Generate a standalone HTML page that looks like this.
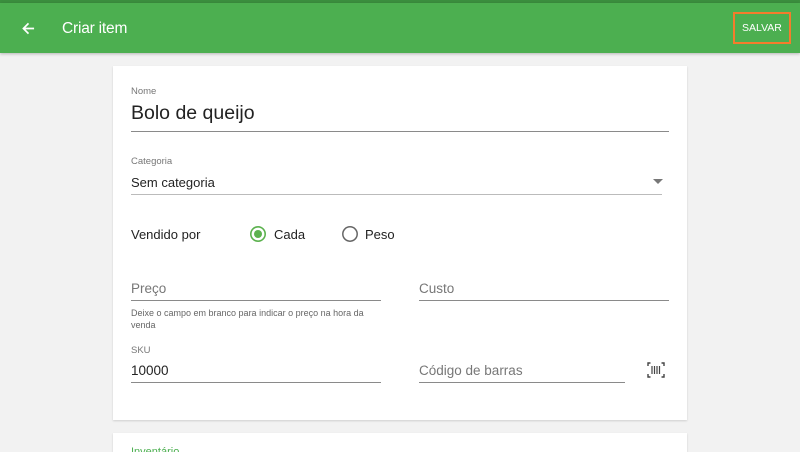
<!DOCTYPE html>
<html><head><meta charset="utf-8"><style>
*{margin:0;padding:0;box-sizing:border-box}
html,body{width:800px;height:452px;overflow:hidden}
body{background:#f2f2f2;font-family:"Liberation Sans",sans-serif;position:relative}
.a{position:absolute}
.top{left:0;top:0;width:800px;height:3px;background:#3b8f3e}
.bar{left:0;top:3px;width:800px;height:50px;background:#4caf50;box-shadow:0 1px 3px rgba(0,0,0,.25)}
.card{background:#fff;box-shadow:0 1px 2px rgba(0,0,0,.15)}
.lbl{font-size:9.5px;color:#777}
.line{height:1px;background:#8a8a8a}
.ph{font-size:13.5px;color:#777}
.t{color:#222}
</style></head><body>
<div class="a top"></div>
<div class="a bar"></div>
<svg class="a" style="left:22px;top:22px" width="13" height="13" viewBox="0 0 14 14"><path d="M13 7H2M7 1.5L1.5 7 7 12.5" stroke="#fff" stroke-width="1.8" fill="none"/></svg>
<div class="a" style="left:62px;top:20px;font-size:15.5px;color:#fff;letter-spacing:-0.2px">Criar item</div>
<div class="a" style="left:733px;top:12px;width:58px;height:32px;border:2px solid #f47c2c"></div>
<div class="a" style="left:742px;top:22px;font-size:10.5px;color:#fff">SALVAR</div>

<div class="a card" style="left:113px;top:66px;width:574px;height:354px"></div>
<div class="a card" style="left:113px;top:433px;width:574px;height:19px"></div>
<div class="a" style="left:131px;top:446px;font-size:11px;color:#4caf50">Inventário</div>

<div class="a lbl" style="left:131px;top:86px">Nome</div>
<div class="a t" style="left:131px;top:102px;font-size:19.5px">Bolo de queijo</div>
<div class="a line" style="left:131px;top:131px;width:538px"></div>

<div class="a lbl" style="left:131px;top:156px">Categoria</div>
<div class="a t" style="left:131px;top:175px;font-size:13px">Sem categoria</div>
<div class="a" style="left:653px;top:179px;width:0;height:0;border-left:5px solid transparent;border-right:5px solid transparent;border-top:5px solid #777"></div>
<div class="a line" style="left:131px;top:194px;width:531px;background:#bbb"></div>

<div class="a t" style="left:131px;top:227px;font-size:13px">Vendido por</div>
<svg class="a" style="left:249px;top:225px" width="18" height="18"><circle cx="9" cy="9" r="7.2" fill="none" stroke="#5cb24f" stroke-width="1.6"/><circle cx="9" cy="9" r="4" fill="#5cb24f"/></svg>
<div class="a t" style="left:274px;top:227px;font-size:13px">Cada</div>
<svg class="a" style="left:341px;top:225px" width="18" height="18"><circle cx="9" cy="9" r="7.2" fill="none" stroke="#666" stroke-width="1.5"/></svg>
<div class="a t" style="left:365px;top:227px;font-size:13px">Peso</div>

<div class="a ph" style="left:131px;top:281px">Preço</div>
<div class="a line" style="left:131px;top:300px;width:250px"></div>
<div class="a ph" style="left:419px;top:281px">Custo</div>
<div class="a line" style="left:419px;top:300px;width:250px"></div>
<div class="a" style="left:131px;top:307px;font-size:9px;color:#666;line-height:12px;width:245px">Deixe o campo em branco para indicar o preço na hora da venda</div>

<div class="a lbl" style="left:131px;top:345px">SKU</div>
<div class="a t" style="left:131px;top:363px;font-size:13.5px">10000</div>
<div class="a line" style="left:131px;top:382px;width:250px"></div>
<div class="a ph" style="left:419px;top:363px">Código de barras</div>
<div class="a line" style="left:419px;top:382px;width:206px"></div>
<svg class="a" style="left:647px;top:362px" width="18" height="16" viewBox="0 0 18 16" fill="none" stroke="#444" stroke-width="1.4"><path d="M3.5 1H1V4M1 12V15H3.5M14.5 1H17V4M17 12V15H14.5"/><path d="M5 4V12M7.5 4V12M10 4V12M12.5 4V12" stroke-width="1.2"/></svg>
</body></html>
